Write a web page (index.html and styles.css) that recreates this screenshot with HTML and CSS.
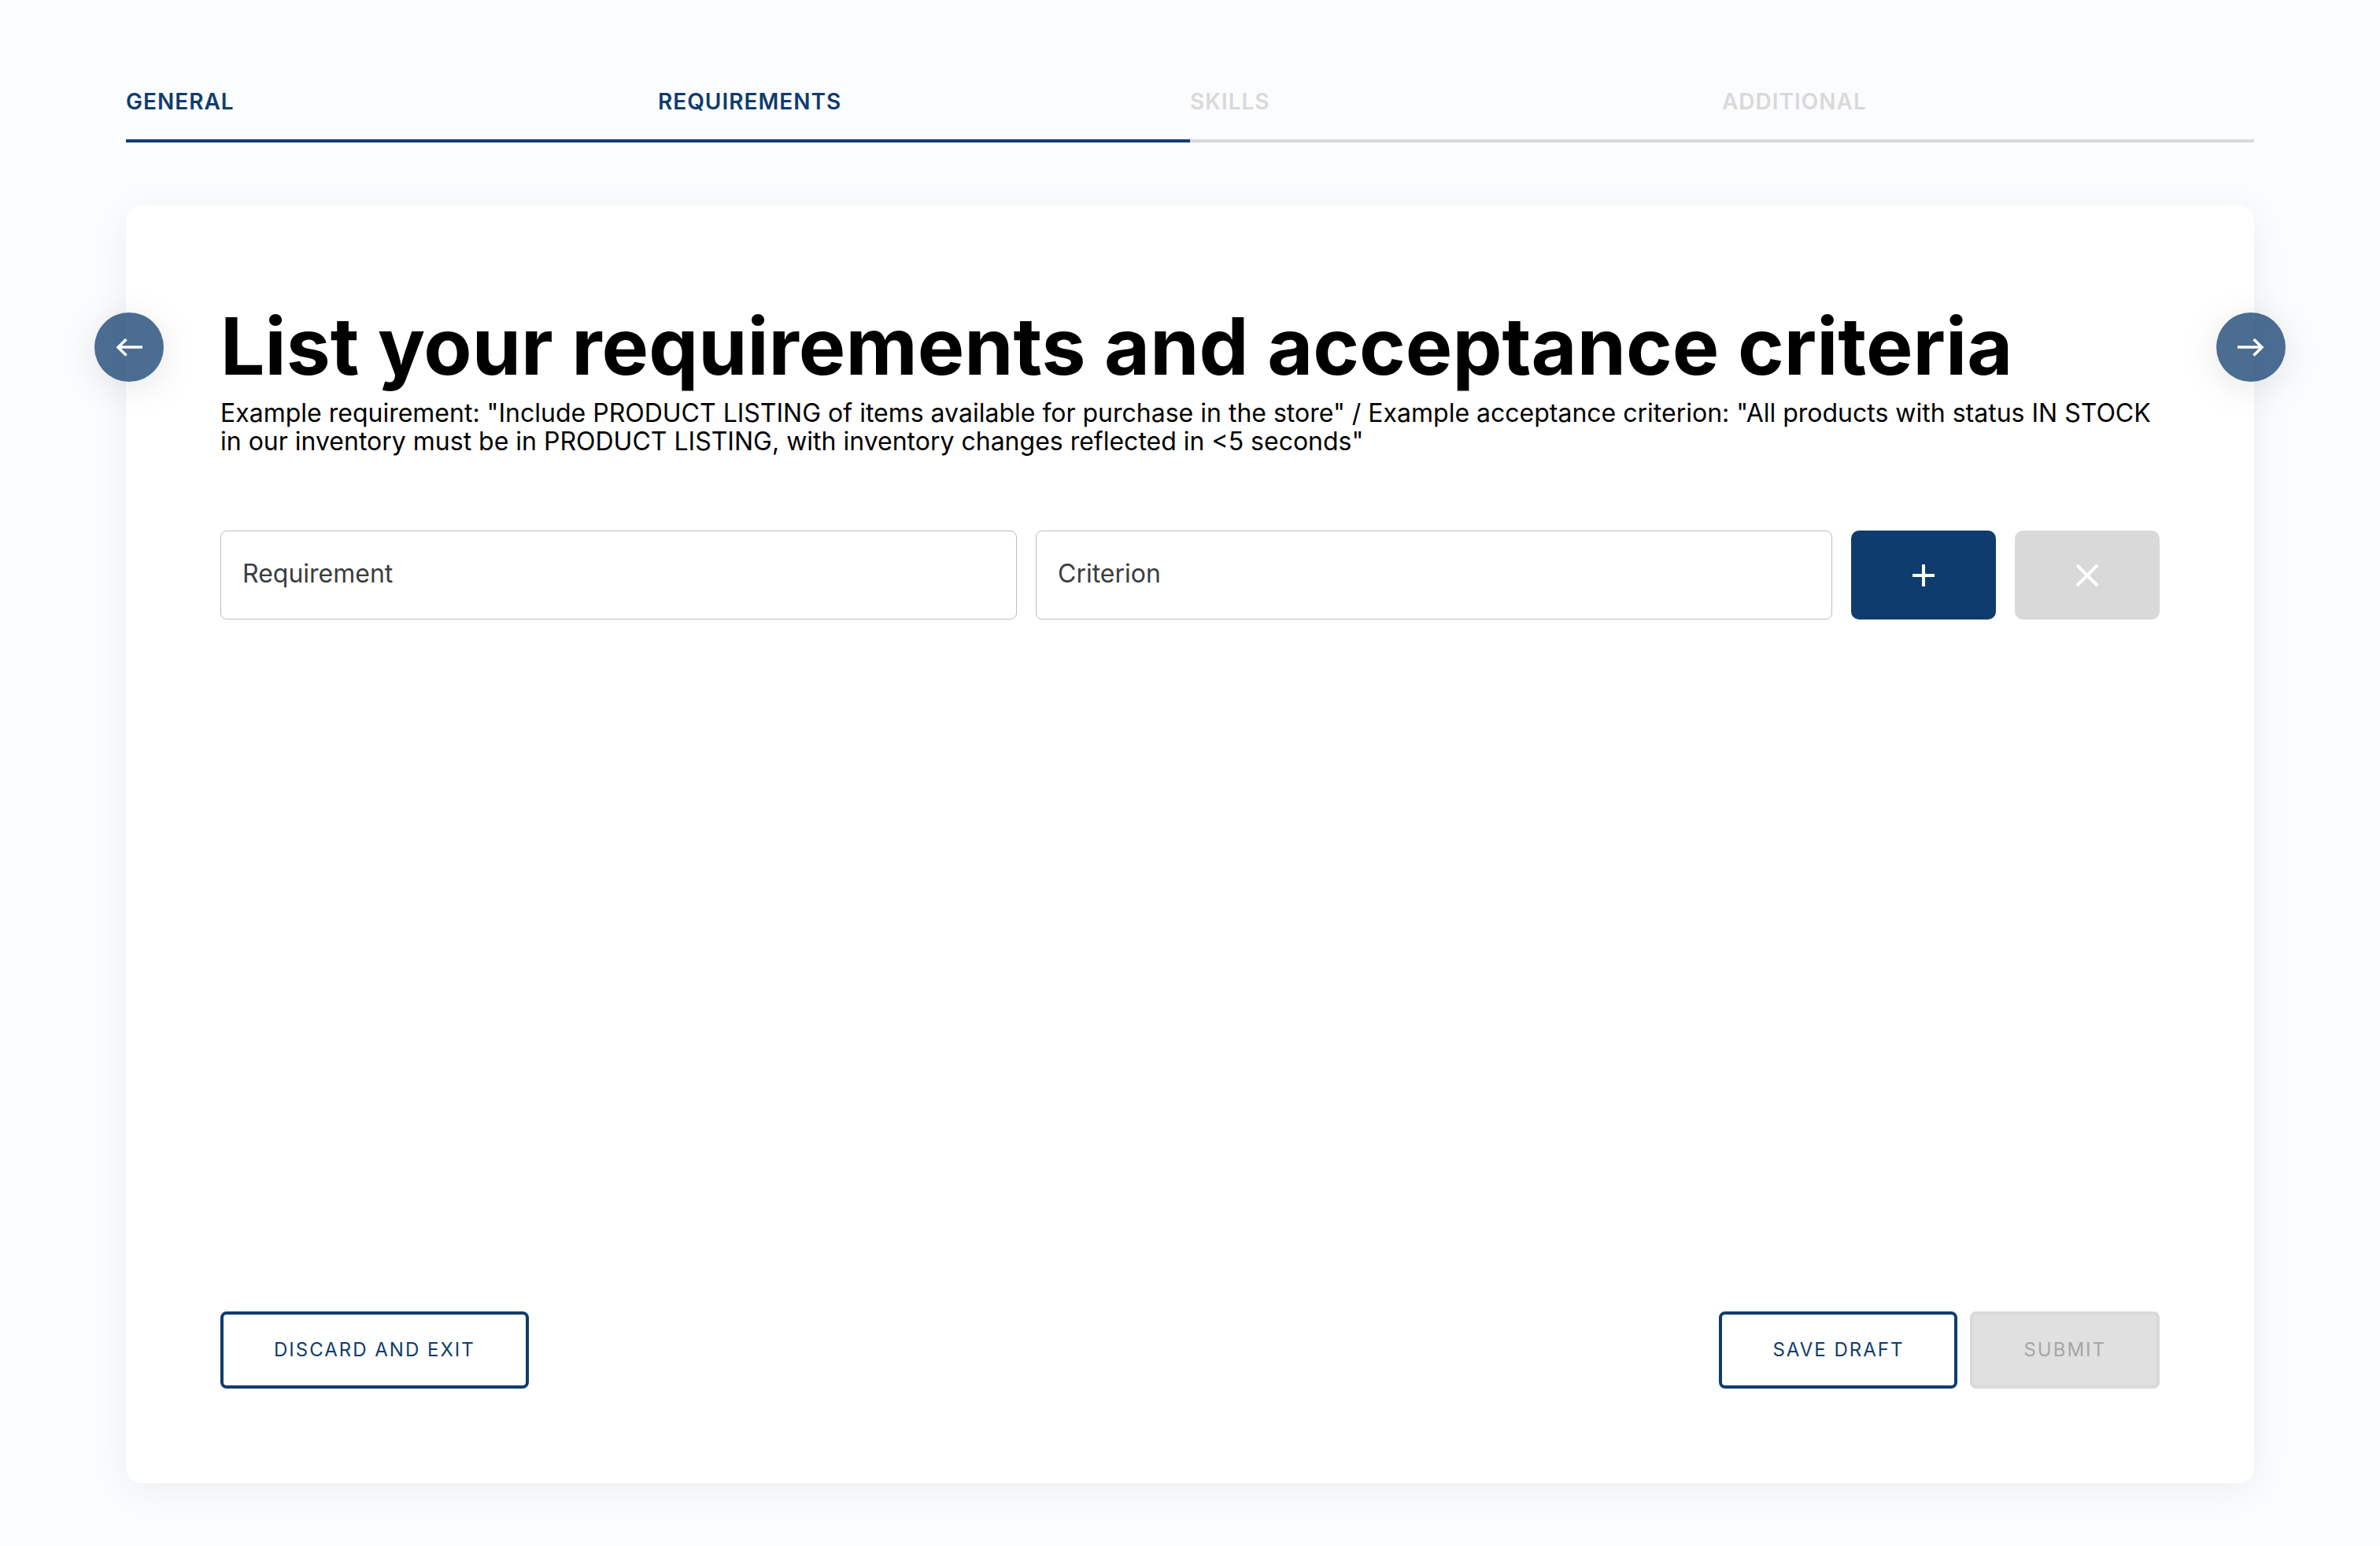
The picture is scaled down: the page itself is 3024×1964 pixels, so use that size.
FILE: index.html
```html
<!DOCTYPE html>
<html lang="en">
<head>
  <meta charset="utf-8">
  <meta name="viewport" content="width=device-width, initial-scale=1">
  <title>Requirements</title>
  <link rel="stylesheet" href="styles.css">
</head>
<body>
  <nav class="steps" aria-label="Steps">
    <a class="step step-done" href="#general">GENERAL</a>
    <a class="step step-done" href="#requirements" aria-current="step">REQUIREMENTS</a>
    <a class="step" href="#skills">SKILLS</a>
    <a class="step" href="#additional">ADDITIONAL</a>
  </nav>

  <main class="card">
    <button class="arrow arrow-prev" type="button" aria-label="Previous step">
      <svg class="arrow-icon" viewBox="0 0 48 48"><path d="M41 24H10M20.500 14 10 24.300l10.500 10.200"/></svg>
    </button>
    <button class="arrow arrow-next" type="button" aria-label="Next step">
      <svg class="arrow-icon" viewBox="0 0 48 48"><path d="M7 24h31M27.500 14 38 24.300 27.500 34.500"/></svg>
    </button>

    <h1 class="title">List your requirements and acceptance criteria</h1>
    <p class="hint">Example requirement: "Include PRODUCT LISTING of items available for purchase in the store" / Example acceptance criterion: "All products with status IN STOCK in our inventory must be in PRODUCT LISTING, with inventory changes reflected in &lt;5 seconds"</p>

    <form class="form">
      <div class="row">
        <input class="field" type="text" aria-label="Requirement" placeholder="Requirement">
        <input class="field" type="text" aria-label="Criterion" placeholder="Criterion">
        <button class="square square-add" type="button" aria-label="Add">
          <svg class="square-icon" viewBox="0 0 40 40"><path d="M20 6v28M6 20h28"/></svg>
        </button>
        <button class="square square-remove" type="button" aria-label="Remove" disabled>
          <svg class="square-icon" viewBox="0 0 40 40"><path d="M7 7l26 26M33 7 7 33"/></svg>
        </button>
      </div>
      <div class="actions">
        <button class="button" type="button">DISCARD AND EXIT</button>
        <div class="actions-end">
          <button class="button" type="button">SAVE DRAFT</button>
          <button class="button" type="submit" disabled>SUBMIT</button>
        </div>
      </div>
    </form>
  </main>
</body>
</html>
```
FILE: styles.css
```css
:root {
  --navy: #0f3c6e;
  --grey: #d9d9d9;
}

* {
  box-sizing: border-box;
}

body {
  display: flex;
  flex-direction: column;
  gap: 80px;
  min-height: 100vh;
  margin: 0;
  padding: 112px 160px 80px;
  background: #fbfcfe;
  color: #000;
  font-family: Inter, sans-serif;
}

.steps {
  display: grid;
  grid-template-columns: repeat(4, 1fr);
}

.step {
  padding-bottom: 31px;
  border-bottom: 4px solid var(--grey);
  color: var(--grey);
  font-size: 28px;
  font-weight: 600;
  line-height: 34px;
  letter-spacing: 1px;
  text-decoration: none;
}

.step-done {
  border-color: var(--navy);
  color: var(--navy);
}

.card {
  position: relative;
  display: flex;
  flex: 1;
  flex-direction: column;
  padding: 120px;
  border-radius: 20px;
  background: #fff;
  box-shadow: 0 8px 48px rgba(0, 0, 0, 0.06);
}

.arrow {
  position: absolute;
  top: 136px;
  display: grid;
  place-items: center;
  width: 88px;
  height: 88px;
  padding: 0;
  border: 0;
  border-radius: 50%;
  background: rgba(15, 60, 110, 0.75);
  box-shadow: 0 8px 48px rgba(0, 0, 0, 0.1);
}

.arrow-prev {
  left: -40px;
}

.arrow-next {
  right: -40px;
}

.arrow-icon {
  width: 48px;
  height: 48px;
  fill: none;
  stroke: #fff;
  stroke-width: 3.5;
}

.title {
  margin: 0 0 8px;
  font-size: 100px;
  font-weight: 700;
  line-height: 118px;
}

.hint {
  margin: 0 0 95px;
  font-size: 32px;
  font-weight: 370;
  line-height: 36px;
}

.form {
  display: flex;
  flex: 1;
  flex-direction: column;
  justify-content: space-between;
}

.row {
  display: grid;
  grid-template-columns: 11fr 11fr 2fr 2fr;
  gap: 24px;
}

.field {
  min-width: 0;
  height: 113px;
  padding: 0 27px 4px;
  border: 1px solid #bdbdbd;
  border-radius: 8px;
  background: #fff;
  font: 370 32px Inter, sans-serif;
}

.field::placeholder {
  color: #3a3d40;
  opacity: 1;
}

.square {
  display: grid;
  place-items: center;
  padding: 0;
  border: 0;
  border-radius: 10px;
}

.square-add {
  background: var(--navy);
}

.square-remove {
  background: var(--grey);
}

.square-icon {
  width: 40px;
  height: 40px;
  fill: none;
  stroke: #fff;
  stroke-width: 4;
}

.actions {
  display: flex;
  justify-content: space-between;
}

.actions-end {
  display: flex;
  gap: 16px;
}

.button {
  height: 98px;
  padding: 0 64px 2px;
  border: 4px solid var(--navy);
  border-radius: 8px;
  background: #fff;
  color: var(--navy);
  font: 400 24px Inter, sans-serif;
  letter-spacing: 2px;
}

.button:disabled {
  border-color: var(--grey);
  background: #e0e0e0;
  color: #a6a6a6;
}
```
